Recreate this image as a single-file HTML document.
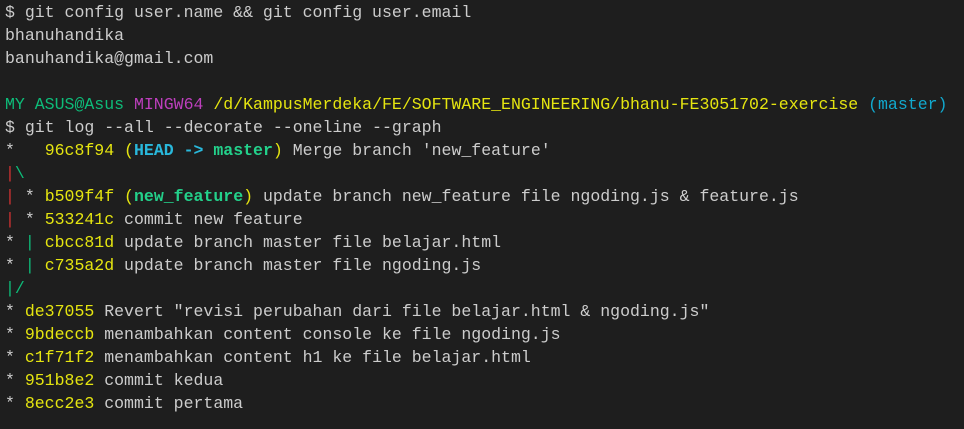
<!DOCTYPE html>
<html><head><meta charset="utf-8"><style>
html,body{margin:0;padding:0;background:#1e1e1e;width:964px;height:429px;overflow:hidden}
pre{margin:0;position:absolute;left:5px;top:1px;font-family:"Liberation Mono",monospace;font-size:16.55px;line-height:23px;color:#cccccc}
.g{color:#0dbc79}.m{color:#bc3fbc}.y{color:#e5e510}.c{color:#11a8cd}
.hc{color:#29b8db;font-weight:bold}.hg{color:#23d18b;font-weight:bold}.r{color:#cd3131}
</style></head><body><pre>$ git config user.name &amp;&amp; git config user.email
bhanuhandika
banuhandika@gmail.com

<span class="g">MY ASUS@Asus</span> <span class="m">MINGW64</span> <span class="y">/d/KampusMerdeka/FE/SOFTWARE_ENGINEERING/bhanu-FE3051702-exercise</span> <span class="c">(master)</span>
$ git log --all --decorate --oneline --graph
*   <span class="y">96c8f94 (</span><span class="hc">HEAD -&gt; </span><span class="hg">master</span><span class="y">)</span> Merge branch 'new_feature'
<span class="r">|</span><span class="g">\</span>
<span class="r">|</span> * <span class="y">b509f4f (</span><span class="hg">new_feature</span><span class="y">)</span> update branch new_feature file ngoding.js &amp; feature.js
<span class="r">|</span> * <span class="y">533241c</span> commit new feature
* <span class="g">|</span> <span class="y">cbcc81d</span> update branch master file belajar.html
* <span class="g">|</span> <span class="y">c735a2d</span> update branch master file ngoding.js
<span class="g">|/</span>
* <span class="y">de37055</span> Revert "revisi perubahan dari file belajar.html &amp; ngoding.js"
* <span class="y">9bdeccb</span> menambahkan content console ke file ngoding.js
* <span class="y">c1f71f2</span> menambahkan content h1 ke file belajar.html
* <span class="y">951b8e2</span> commit kedua
* <span class="y">8ecc2e3</span> commit pertama
</pre></body></html>
